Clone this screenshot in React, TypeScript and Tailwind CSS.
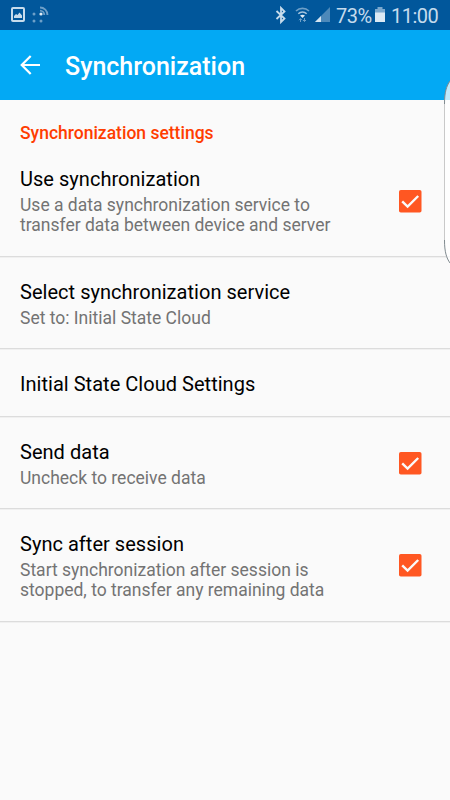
import React from 'react';
import clsx from 'clsx';

interface PreferenceProps {
  title: string;
  summary?: string[];
  checked?: boolean;
}

const CheckMark = () => (
  <svg width="24" height="24" viewBox="0 0 24 24" className="mb-[3px] shrink-0">
    <rect x="1" y="1" width="22.5" height="22.5" rx="1.8" fill="#ff5722" />
    <path d="M4.2 12.3l5.4 5.2L20.2 7" fill="none" stroke="#fafafa" strokeWidth="2.4" />
  </svg>
);

const Preference: React.FC<PreferenceProps> = ({ title, summary, checked }) => (
  <div className="border-b border-[#f0f0f0]">
    <div className="flex items-center justify-between border-b border-[#dcdcdc] pt-[21px] pb-[18px] pl-5 pr-7">
      <div>
        <div className="text-[20px] leading-[27px] tracking-[0.03px] text-black whitespace-nowrap">{title}</div>
        {summary && (
          <div className="pt-[1.6px] pb-[2px] text-[17.5px] leading-[20.5px] text-[#737373]">
            {summary.map((line) => (
              <div key={line} className="whitespace-nowrap">{line}</div>
            ))}
          </div>
        )}
      </div>
      {checked && <CheckMark />}
    </div>
  </div>
);

const StatusBar = () => (
  <div className="flex h-[30px] items-center bg-[#01579b] text-[#c5dbed]">
    <svg width="60" height="30" viewBox="0 0 60 30" fill="none">
      <rect x="12" y="8" width="12" height="13" rx="1" stroke="#c8dcec" strokeWidth="2" />
      <path d="M14 18v-2l2-2 1.5 1 2-2.5 2.5 3V18z" fill="#c8dcec" />
      <g fill="#6d9fc8">
        <circle cx="34" cy="14" r="1.5" />
        <circle cx="34" cy="21" r="1.5" />
        <circle cx="41" cy="21" r="1.5" />
      </g>
      <circle cx="41" cy="14" r="1.6" fill="#e2edf5" />
      <path d="M40 10.7a4.3 4.3 0 0 1 4.3 4.3M40 7.5a7.5 7.5 0 0 1 7.5 7.5" stroke="#6d9fc8" strokeWidth="1.8" />
    </svg>
    <div className="grow" />
    <svg width="66" height="30" viewBox="270 0 66 30" fill="none">
      <path d="M276.500 11l8 7.500-3.500 3.500V8l3.500 3.500-8 7.500" stroke="#c8dcec" strokeWidth="1.8" />
      <path d="M296 11a9.500 9.500 0 0 1 13 0" stroke="#6d9fc8" strokeWidth="1.7" />
      <path d="M298.300 13.700a6 6 0 0 1 8.400 0" stroke="#a5c4de" strokeWidth="1.5" />
      <path d="M300 15.500q2.500-1.600 5 0L302.500 18z" fill="#dce9f4" />
      <path d="M300.500 22v-3.500M299 20.200l1.500-1.500 1.500 1.500M304.500 18v3.500M303 20l1.500 1.500 1.500-1.500" stroke="#6d9fc8" />
      <path d="M330 7v15h-15z" fill="#4d89ba" />
      <path d="M321 16v6h-6z" fill="#d4e4f1" />
    </svg>
    <span className="w-[38px] pt-0.5 text-[20px] leading-[28px] tracking-[-0.45px] whitespace-nowrap">73%</span>
    <svg width="12" height="30" viewBox="374 0 12 30">
      <path d="M377.500 7h5v2h2.500v5h-10V9h2.500z" fill="#7ba8ce" />
      <path d="M375 12.500h10V22h-10z" fill="#dce9f4" />
    </svg>
    <span className="ml-[5px] w-[59px] pt-0.5 text-[20px] leading-[28px] tracking-[-0.5px] whitespace-nowrap">11:00</span>
  </div>
);

const Toolbar = () => (
  <div className="flex h-[70px] items-center bg-[#03a9f4] pl-5 text-white">
    <svg width="20" height="20" viewBox="0 0 20 20" fill="none" stroke="#ffffff" strokeWidth="2.2">
      <path d="M20 10H2M10.700 0.900L1.700 10l9 9.100" />
    </svg>
    <h1 className="pt-[3px] pl-[25px] text-[25px] leading-[30px] font-medium">Synchronization</h1>
  </div>
);

// Handle of the system edge panel, cut off by the right side of the screen
const EdgeHandle = () => (
  <svg className="absolute top-[78px] right-0" width="8" height="190" viewBox="0 0 8 190">
    <path d="M8 3C4.500 8 2.500 14 2.500 26V162c0 12 2 18 5.500 23z" fill="#ffffff" fillOpacity="0.75" />
    <path d="M2.500 26V162" stroke="#c9c9c9" />
    <path d="M8 3C4.500 8 2.500 14 2.500 26M2.500 162c0 12 2 18 5.500 23" fill="none" stroke="#808a8f" />
  </svg>
);

const preferences: PreferenceProps[] = [
  {
    title: 'Use synchronization',
    summary: ['Use a data synchronization service to', 'transfer data between device and server'],
    checked: true,
  },
  { title: 'Select synchronization service', summary: ['Set to: Initial State Cloud'] },
  { title: 'Initial State Cloud Settings' },
  { title: 'Send data', summary: ['Uncheck to receive data'], checked: true },
  {
    title: 'Sync after session',
    summary: ['Start synchronization after session is', 'stopped, to transfer any remaining data'],
    checked: true,
  },
];

export default function App() {
  return (
    <div className={clsx('relative h-[800px] w-[450px] overflow-hidden bg-[#fafafa]', "font-['Roboto',sans-serif]")}>
      <StatusBar />
      <Toolbar />
      <h2 className="h-[45.4px] pt-[23px] pl-5 text-[17.5px] leading-[21px] font-medium text-[#ff3d00]">
        Synchronization settings
      </h2>
      {preferences.map((item) => (
        <Preference key={item.title} {...item} />
      ))}
      <EdgeHandle />
    </div>
  );
}
